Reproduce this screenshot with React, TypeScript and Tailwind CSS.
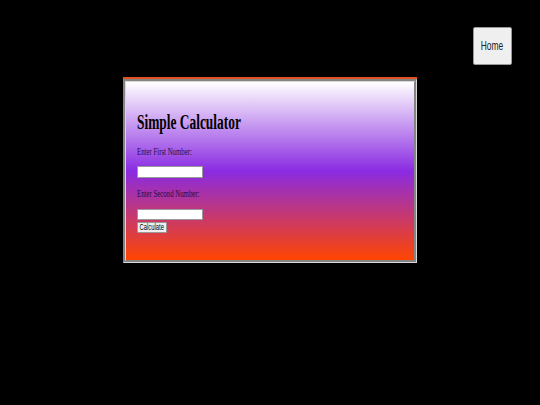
export default function App() {
  return (
    <div className="w-[540px] h-[405px] bg-black overflow-hidden font-['Liberation_Serif',serif]">
      <div className="flex justify-end pt-[27px] pr-[28px]">
        <button className="w-[39px] h-[38px] bg-[#efefef] border border-[#999] rounded-[2px] flex items-center justify-center text-[12px] text-[#222] font-['Liberation_Sans',Arial,sans-serif]">
          <span className="inline-block [transform:scaleX(0.7)]">Home</span>
        </button>
      </div>

      <div className="ml-[123px] mt-[14px] w-[294px] h-[184px] shadow-[0_-2px_0_#e4501e] border-[3px] [border-style:groove] border-[#d8d8d8] bg-[linear-gradient(#ffffff,#8a2be2,#ff4500)] pl-[11px] pt-[30px] text-[#2a0d3c]">
        <div className="h-[20px] leading-[20px] text-[20px] font-bold text-black whitespace-nowrap">
          <span className="inline-block origin-left [transform:scaleX(0.67)]">Simple Calculator</span>
        </div>
        <div className="mt-[13px] h-[12px] leading-[12px] text-[11px] whitespace-nowrap">
          <span className="inline-block origin-left [transform:scaleX(0.62)]">Enter First Number:</span>
        </div>
        <input type="text" className="block mt-[9px] w-[66px] h-[12px] bg-white border border-[#999]" />
        <div className="mt-[9px] h-[12px] leading-[12px] text-[11px] whitespace-nowrap">
          <span className="inline-block origin-left [transform:scaleX(0.62)]">Enter Second Number:</span>
        </div>
        <input type="text" className="block mt-[10px] w-[66px] h-[11px] bg-white border border-[#999]" />
        <button className="mt-[2px] w-[30px] h-[11px] bg-[#efefef] border border-[#999] rounded-[1px] flex items-center justify-center text-[9px] text-black font-['Liberation_Sans',Arial,sans-serif] whitespace-nowrap overflow-hidden">
          <span className="inline-block [transform:scaleX(0.65)]">Calculate</span>
        </button>
      </div>
    </div>
  );
}
